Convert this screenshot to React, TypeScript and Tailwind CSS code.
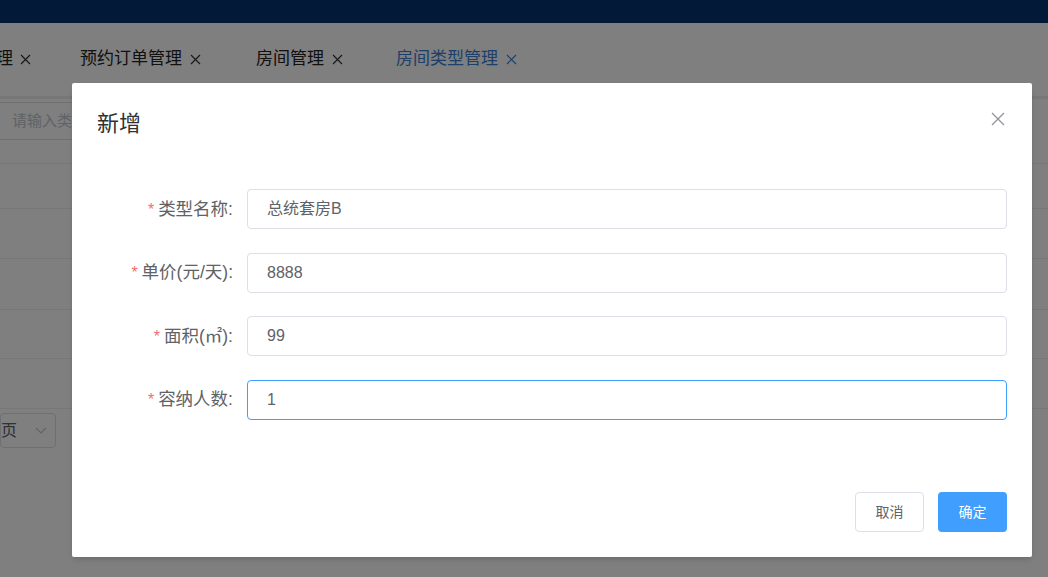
import React from "react";

const rows = [
  { label: "类型名称:", value: "总统套房B" },
  { label: "单价(元/天):", value: "8888" },
  { label: "面积(㎡):", value: "99" },
  { label: "容纳人数:", value: "1", focus: true },
];

const X = ({ c = "#333" }: { c?: string }) => (
  <svg width="11" height="11" viewBox="0 0 11 11"><path d="M1 1L10 10M10 1L1 10" stroke={c} strokeWidth="1.2" /></svg>
);

export default function App() {
  return (
    <div className="relative w-[1048px] h-[577px] overflow-hidden bg-white text-[#303133]" style={{ fontFamily: '"Liberation Sans","Noto Sans CJK SC",sans-serif' }}>
      <div className="h-[23px] bg-[#043570]" />
      <div className="h-[76px] flex items-center text-[17px] text-[#222] border-b-[3px] border-[#eee] pb-[1px]">
        <div className="flex items-center gap-[7px] -ml-[4px] mr-[49px]"><span>理</span><X /></div>
        <div className="flex items-center gap-[8px] mr-[55px]"><span>预约订单管理</span><X /></div>
        <div className="flex items-center gap-[8px] mr-[53px]"><span>房间管理</span><X /></div>
        <div className="flex items-center gap-[8px] text-[#3a7fd0]"><span>房间类型管理</span><X c="#3a7fd0" /></div>
      </div>
      <div className="mt-[3px] h-[38px] border-y border-[#dcdfe6] w-[200px] flex items-center pl-[12px] text-[15px] text-[#c0c4cc]">请输入类</div>
      <div className="mt-[23px] border-t border-[#ebeef5]">
        <div className="h-[45px] border-b border-[#ebeef5]" />
        <div className="h-[50px] border-b border-[#ebeef5]" />
        <div className="h-[51px] border-b border-[#ebeef5]" />
        <div className="h-[49px] border-b border-[#ebeef5]" />
        <div className="h-[50px] border-b border-[#ebeef5]" />
      </div>
      <div className="mt-[4px] w-[56px] h-[35px] border border-[#dcdfe6] rounded-[4px] flex items-center justify-between pr-[8px] text-[16px] text-[#606266]">
        <span>页</span>
        <svg width="12" height="8" viewBox="0 0 12 8"><path d="M1 1L6 6L11 1" stroke="#c0c4cc" strokeWidth="1.2" fill="none" /></svg>
      </div>

      <div className="absolute inset-0 bg-black/50" />

      <div className="absolute left-[72px] top-[83px] w-[960px] h-[474px] bg-white rounded-[2px] shadow-md flex flex-col">
        <div className="flex items-start justify-between pl-[25px] pr-[27px] pt-[27px]">
          <span className="text-[22px] text-[#303133] leading-[28px]">新增</span>
          <svg width="14" height="14" viewBox="0 0 14 14" className="mt-[2px]"><path d="M1 1L13 13M13 1L1 13" stroke="#909399" strokeWidth="1.3" /></svg>
        </div>
        <div className="mt-[51px] flex flex-col gap-[23.5px] pr-[25px]">
          {rows.map((r) => (
            <div key={r.label} className="flex items-center h-[40px]">
              <div className="w-[175px] pr-[14px] text-right text-[17.5px] text-[#606266]">
                <span className="text-[#f56c6c] mr-[4px] text-[16px]">*</span>{r.label}
              </div>
              <div className={`flex-1 h-[40px] rounded-[4px] border ${r.focus ? "border-[#409eff]" : "border-[#dcdfe6]"} flex items-center pl-[19px] text-[16px] text-[#606266]`}>
                {r.value}
              </div>
            </div>
          ))}
        </div>
        <div className="mt-auto mb-[25px] flex justify-end gap-[14px] pr-[25px]">
          <button className="w-[69px] h-[40px] rounded-[4px] border border-[#dcdfe6] text-[14px] text-[#606266] bg-white">取消</button>
          <button className="w-[69px] h-[40px] rounded-[4px] bg-[#409eff] text-[14px] text-white">确定</button>
        </div>
      </div>
    </div>
  );
}
